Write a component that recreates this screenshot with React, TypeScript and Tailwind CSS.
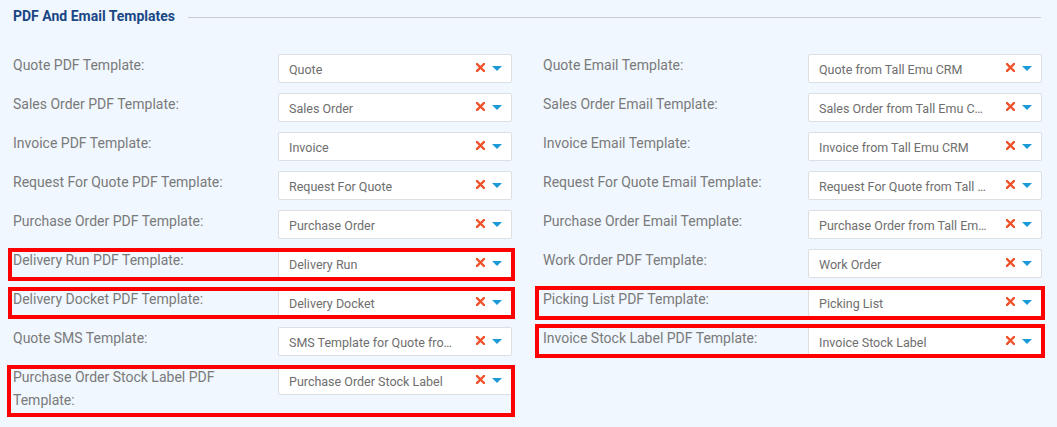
type Field = {
  label: string;
  value: string;
  mark?: string;
};

const leftFields: Field[] = [
  { label: 'Quote PDF Template:', value: 'Quote' },
  { label: 'Sales Order PDF Template:', value: 'Sales Order' },
  { label: 'Invoice PDF Template:', value: 'Invoice' },
  { label: 'Request For Quote PDF Template:', value: 'Request For Quote' },
  { label: 'Purchase Order PDF Template:', value: 'Purchase Order' },
  { label: 'Delivery Run PDF Template:', value: 'Delivery Run', mark: '-left-[5px] -right-[3px] -top-[1px] -bottom-[3px]' },
  { label: 'Delivery Docket PDF Template:', value: 'Delivery Docket', mark: '-left-[5px] -right-[3px] -top-[1px] -bottom-[2px]' },
  { label: 'Quote SMS Template:', value: 'SMS Template for Quote from Tall Emu CRM' },
  { label: 'Purchase Order Stock Label PDF Template:', value: 'Purchase Order Stock Label', mark: '-left-[6px] -right-[3px] -top-[1px] -bottom-[5px]' },
];

const rightFields: Field[] = [
  { label: 'Quote Email Template:', value: 'Quote from Tall Emu CRM' },
  { label: 'Sales Order Email Template:', value: 'Sales Order from Tall Emu CRM' },
  { label: 'Invoice Email Template:', value: 'Invoice from Tall Emu CRM' },
  { label: 'Request For Quote Email Template:', value: 'Request For Quote from Tall Emu CRM' },
  { label: 'Purchase Order Email Template:', value: 'Purchase Order from Tall Emu CRM' },
  { label: 'Work Order PDF Template:', value: 'Work Order' },
  { label: 'Picking List PDF Template:', value: 'Picking List', mark: '-left-[8px] -right-[3px] -top-[2px] -bottom-[3px]' },
  { label: 'Invoice Stock Label PDF Template:', value: 'Invoice Stock Label', mark: '-left-[8px] -right-[3px] -top-[3px] -bottom-[2px]' },
];

function Row({ field }: { field: Field }) {
  return (
    <div className="relative flex items-start">
      <div className="w-[265px] shrink-0 pr-[15px] text-[14px] leading-[23px] text-[#7a7a7a]">
        {field.label}
      </div>
      <div className="flex h-[29px] min-w-0 flex-1 items-center rounded-[2px] border border-[#dcdfe3] bg-white pl-[10px] pr-[9px]">
        <span className="mt-[3px] min-w-0 flex-1 truncate pr-[18px] text-[12.5px] text-[#6e6e6e]">{field.value}</span>
        {/* clear */}
        <svg width="9" height="9" viewBox="0 0 9 9" className="-mt-[2px] shrink-0">
          <path d="M1 1 L8 8 M8 1 L1 8" stroke="#f0522a" strokeWidth="2.4" strokeLinecap="square" />
        </svg>
        {/* dropdown */}
        <svg width="10" height="5" viewBox="0 0 10 5" className="-mt-[1px] ml-[7px] shrink-0">
          <path d="M0 0 L10 0 L5 5 Z" fill="#1c9ad8" />
        </svg>
      </div>
      {field.mark && (
        <span className={`pointer-events-none absolute border-4 border-[#ff0000] ${field.mark}`} />
      )}
    </div>
  );
}

export default function App() {
  return (
    <div className="h-[427px] w-[1057px] overflow-hidden bg-[#f0f7fe]" style={{ fontFamily: 'Roboto, "Liberation Sans", sans-serif' }}>
      <div className="flex items-center pl-[13px] pr-[16px] pt-[6px]">
        <h2 className="text-[14px] font-bold leading-[20px] text-[#1a4785]">PDF And Email Templates</h2>
        <div className="ml-[13px] mt-[3px] h-px flex-1 bg-[#c9cbce]" />
      </div>
      <div className="mt-[28px] grid grid-cols-2 gap-x-[31px] pl-[13px] pr-[15px]">
        <div className="flex min-w-0 flex-col gap-[10px]">
          {leftFields.map((f) => (
            <Row key={f.label} field={f} />
          ))}
        </div>
        <div className="flex min-w-0 flex-col gap-[10px]">
          {rightFields.map((f) => (
            <Row key={f.label} field={f} />
          ))}
        </div>
      </div>
    </div>
  );
}
